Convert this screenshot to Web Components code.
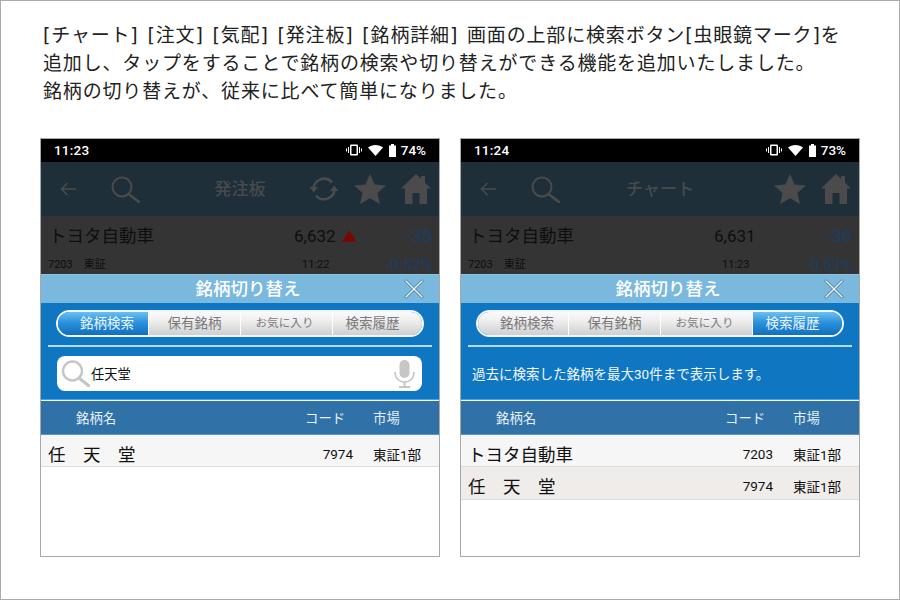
<!DOCTYPE html>
<html lang="ja">
<head>
<meta charset="utf-8">
<title>銘柄切り替え</title>
<style>
html, body { margin: 0; padding: 0; background: #fff; }
body { font-family: Roboto, "Noto Sans CJK JP", sans-serif; }
</style>
</head>
<body>
<release-page>
  <release-note>[チャート] [注文] [気配] [発注板] [銘柄詳細] 画面の上部に検索ボタン[虫眼鏡マーク]を<br>追加し、タップをすることで銘柄の検索や切り替えができる機能を追加いたしました。<br>銘柄の切り替えが、従来に比べて簡単になりました。</release-note>
  <phone-shot slot="shots">
    <status-bar time="11:23" battery="74%"></status-bar>
    <app-nav title-text="発注板" refresh></app-nav>
    <stock-quote name="トヨタ自動車" price="6,632" up change="-35" meta="7203&#12288;東証" time="11:22" rate="-0.52%"></stock-quote>
    <switch-panel active="0">
      <search-box value="任天堂"></search-box>
    </switch-panel>
    <stock-table>
      <stock-row name="任　天　堂" code="7974" market="東証1部"></stock-row>
    </stock-table>
  </phone-shot>
  <phone-shot slot="shots">
    <status-bar time="11:24" battery="73%"></status-bar>
    <app-nav title-text="チャート"></app-nav>
    <stock-quote name="トヨタ自動車" price="6,631" change="-36" meta="7203&#12288;東証" time="11:23" rate="-0.53%"></stock-quote>
    <switch-panel active="3">
      <p-note>過去に検索した銘柄を最大30件まで表示します。</p-note>
    </switch-panel>
    <stock-table>
      <stock-row name="トヨタ自動車" code="7203" market="東証1部"></stock-row>
      <stock-row name="任　天　堂" code="7974" market="東証1部" alt></stock-row>
    </stock-table>
  </phone-shot>
</release-page>

<script>
const JP = `Roboto, "Noto Sans CJK JP", sans-serif`;

class Base extends HTMLElement {
    constructor(){
        super();
        this.shadowDOM = this.attachShadow({mode:"open"});
    }
    connectedCallback(){
        this.render();
    }
    attr(name) {
        return this.getAttribute(name) || "";
    }
}

class ReleasePage extends Base {
    render() {
        this.shadowDOM.innerHTML = `
        <style>
        :host { display: block; width: 900px; height: 600px; box-sizing: border-box; border: 1px solid #aaa; }
        .shots { display: flex; gap: 20px; padding-left: 39px; margin-top: 24px; }
        </style>
        <slot></slot>
        <div class="shots"><slot name="shots"></slot></div>
        `;
    }
}

class ReleaseNote extends Base {
    render() {
        this.shadowDOM.innerHTML = `
        <style>
        :host { display: block; padding: 20px 0 0 42px; height: 93px; font: 400 19px/28px "DejaVu Sans", "Noto Sans CJK JP", sans-serif; letter-spacing: .83px; word-spacing: 2px; color: #222; white-space: nowrap; }
        </style>
        <slot></slot>
        `;
    }
}

class PhoneShot extends Base {
    render() {
        this.shadowDOM.innerHTML = `
        <style>
        :host { display: flex; flex-direction: column; width: 400px; height: 419px; box-sizing: border-box; border: 1px solid #a8a8a8; background: #fff; overflow: hidden; font-family: ${JP}; }
        </style>
        <slot></slot>
        `;
    }
}

class StatusBar extends Base {
    render() {
        this.shadowDOM.innerHTML = `
        <style>
        :host { display: flex; align-items: center; height: 23px; flex: none; box-sizing: border-box; padding: 0 13px 1px; background: #000; color: #fff; font: 500 13.500px Roboto, sans-serif; }
        .time { flex: 1; letter-spacing: .2px; }
        .icons { display: flex; align-items: center; }
        svg { display: block; fill: #fff; }
        .vib { margin-right: 6px; }
        .wifi { margin-right: 6px; }
        .bat { margin-right: 5px; }
        </style>
        <span class="time">${this.attr("time")}</span>
        <span class="icons">
          <svg class="vib" width="16" height="12" viewBox="0 0 16 12"><path d="M5 0.500h6a1 1 0 0 1 1 1v9a1 1 0 0 1-1 1H5a1 1 0 0 1-1-1v-9a1 1 0 0 1 1-1zM5.500 2v8h5V2z" fill-rule="evenodd"/><path d="M2 3h1v6H2zM13 3h1v6h-1zM0 4.500h1v3H0zM15 4.500h1v3h-1z"/></svg>
          <svg class="wifi" width="15" height="11" viewBox="0 0 15 11"><path d="M0 2.600C2 1 4.600 0 7.500 0S13 1 15 2.600L7.500 11z"/></svg>
          <svg class="bat" width="7" height="13" viewBox="0 0 7 13"><path d="M2 0h3v1.500h2V13H0V1.500h2z"/></svg>
          <span>${this.attr("battery")}</span>
        </span>
        `;
    }
}

class AppNav extends Base {
    render() {
        const refresh = this.hasAttribute("refresh") ? `
          <svg class="refresh" width="30" height="26" viewBox="0 0 30 26" fill="none" stroke="#4b4b4b" stroke-width="2.600">
            <path d="M4.500 13A10.500 10.500 0 0 1 23 6.500"/><path d="M25.500 13A10.500 10.500 0 0 1 7 19.500"/>
            <path d="M0.500 11h8.500l-4.300 5.500zM21 15h8.500l-4.300-5.500z" fill="#4b4b4b" stroke="none"/>
          </svg>` : "";
        this.shadowDOM.innerHTML = `
        <style>
        :host { display: grid; grid-template-columns: 1fr auto 1fr; align-items: center; height: 54px; flex: none; background: #1e2f3a; }
        .left { display: flex; align-items: center; padding-left: 19px; gap: 35px; }
        .right { display: flex; align-items: center; justify-content: flex-end; padding-right: 8px; gap: 15px; }
        .title { font: 500 17.200px "Noto Sans CJK JP", sans-serif; color: #474a4c; padding-bottom: 3px; }
        svg { display: block; }
        </style>
        <div class="left">
          <svg width="16" height="14" viewBox="0 0 16 14" fill="none" stroke="#4b4b4b" stroke-width="1.400"><path d="M16 7H1.500M7.500 1L1.500 7l6 6"/></svg>
          <svg width="29" height="27" viewBox="0 0 29 27" fill="none" stroke="#4b4b4b"><circle cx="11" cy="11" r="9.500" stroke-width="2"/><path d="M17.500 18L28 26" stroke-width="2.600" stroke-linecap="round"/></svg>
        </div>
        <div class="title">${this.attr("title-text")}</div>
        <div class="right">
          ${refresh}
          <svg width="32" height="30" viewBox="0 0 32 30" fill="#4b4b4b"><path d="M16 0l4.600 10.500L32 11.600l-8.600 7.500L26 30l-10-5.800L6 30l2.600-10.900L0 11.600l11.400-1.100z"/></svg>
          <svg width="30" height="30" viewBox="0 0 30 30" fill="#4b4b4b"><path d="M15 0l5 4.800V2h4v6.700l6 5.800h-4V30h-7.500V19h-7v11H4V14.500H0z"/></svg>
        </div>
        `;
    }
}

class StockQuote extends Base {
    render() {
        const up = this.hasAttribute("up") ? `<svg width="15" height="12" viewBox="0 0 15 12"><path d="M7.500 0L15 12H0z" fill="#7a0505"/></svg>` : "";
        this.shadowDOM.innerHTML = `
        <style>
        :host { display: grid; grid-template-columns: 1fr 62px 76px; grid-template-rows: 40px 18px; height: 58px; flex: none; background: #343434; color: #0e0e0e; padding: 0 7px 0 8px; box-sizing: border-box; overflow: hidden; }
        .name, .price, .chg { margin-top: 7px; height: 26px; line-height: 26px; white-space: nowrap; }
        .name { font-size: 17.500px; }
        .price { font-size: 17px; display: flex; align-items: center; gap: 6px; }
        .chg { font-size: 18px; justify-self: end; color: #1a3d66; }
        .meta, .time, .rate { line-height: 18px; white-space: nowrap; }
        .meta { font-size: 11px; margin-left: -1px; }
        .time { font-size: 11px; margin-left: 8px; }
        .rate { font-size: 15.500px; justify-self: end; color: #1a3d66; }
        </style>
        <div class="name">${this.attr("name")}</div>
        <div class="price"><span>${this.attr("price")}</span>${up}</div>
        <div class="chg">${this.attr("change")}</div>
        <div class="meta">${this.attr("meta")}</div>
        <div class="time">${this.attr("time")}</div>
        <div class="rate">${this.attr("rate")}</div>
        `;
    }
}

class SwitchPanel extends Base {
    render() {
        const labels = ["銘柄検索", "保有銘柄", "お気に入り", "検索履歴"];
        const active = Number(this.attr("active"));
        const tabs = labels.map((label, i) =>
            `<div class="tab ${i === active ? "on" : ""} ${label.length > 4 ? "small" : ""}">${label}</div>`).join("");
        this.shadowDOM.innerHTML = `
        <style>
        :host { display: block; flex: none; }
        .head { display: flex; align-items: center; justify-content: center; position: relative; height: 29px; background: #7ab8de; color: #fff; font: 500 17.500px "Noto Sans CJK JP", sans-serif; border-top: 1px solid #8cc4e6; box-sizing: border-box; padding: 0 0 4px 16px; }
        .close { position: absolute; right: 15px; top: 4px; }
        .body { height: 97px; box-sizing: border-box; background: #0f76c2; padding: 7px 7px 0; border-bottom: 1px solid #4da0dc; display: flex; flex-direction: column; }
        .tabs { display: grid; grid-template-columns: 90px 92px 92px 1fr; height: 27px; margin: 0 8px; box-sizing: border-box; border: 2px solid #f2f6fa; border-radius: 13.500px; overflow: hidden; flex: none; }
        .tab { display: flex; align-items: center; justify-content: center; padding-bottom: 3px; box-sizing: border-box; font-size: 13.500px; color: #7a7a7a; background: linear-gradient(#fafafa, #f0f0f0 35%, #cfcfcf); border-left: 1px solid #fff; white-space: nowrap; }
        .tab:first-child { border-left: 0; padding-left: 8px; }
        .tab:last-child { padding-right: 10px; }
        .tab.small { font-size: 11.600px; padding-right: 4px; }
        .tab.on { color: #e8f4fc; background: linear-gradient(#6cc0f2, #2c92dc 45%, #0f6fbe); }
        hr { margin: 8px 0 0; border: 0; height: 2px; background: #b5dbf3; flex: none; }
        .content { flex: 1; }
        .line { height: 1px; background: #fff; }
        </style>
        <div class="head">銘柄切り替え
          <svg class="close" width="20" height="20" viewBox="0 0 20 20" fill="none" stroke-linecap="round">
            <path d="M2 2l16 16M18 2L2 18" stroke="#4d7f9f" stroke-width="3"/>
            <path d="M2 2l16 16M18 2L2 18" stroke="#eef6fb" stroke-width="1.400"/>
          </svg>
        </div>
        <div class="body">
          <div class="tabs">${tabs}</div>
          <hr>
          <div class="content"><slot></slot></div>
        </div>
        <div class="line"></div>
        `;
    }
}

class SearchBox extends Base {
    render() {
        this.shadowDOM.innerHTML = `
        <style>
        :host { display: flex; align-items: center; height: 35px; margin: 9px 10px 0 9px; box-sizing: border-box; background: #fff; border-radius: 8px; padding: 0 7px 0 4px; color: #111; font-size: 13.300px; }
        .text { flex: 1; margin-left: 1px; }
        svg { display: block; }
        </style>
        <svg width="29" height="27" viewBox="0 0 29 27" fill="none" stroke="#c6c6c6"><circle cx="11.500" cy="11" r="9.500" stroke-width="2.400"/><path d="M18 18l10 8" stroke-width="3.200" stroke-linecap="round"/></svg>
        <span class="text">${this.attr("value")}</span>
        <svg width="21" height="28" viewBox="0 0 21 28" fill="none"><rect x="5.500" y="0" width="10" height="18" rx="5" fill="#c6c6c6"/><path d="M1 12c0 6 4 10 9.500 10S20 18 20 12" stroke="#c6c6c6" stroke-width="1.600"/><path d="M10.500 22v4M5 27h11" stroke="#c6c6c6" stroke-width="2"/></svg>
        `;
    }
}

class PNote extends Base {
    render() {
        this.shadowDOM.innerHTML = `
        <style>
        :host { display: block; padding: 17px 0 0 4px; color: #f2f8fc; font-size: 13.500px; line-height: 20px; white-space: nowrap; }
        </style>
        <slot></slot>
        `;
    }
}

class StockTable extends Base {
    render() {
        this.shadowDOM.innerHTML = `
        <style>
        :host { display: block; flex: 1; background: #fff; }
        .head { display: grid; grid-template-columns: 1fr 48px 66px; column-gap: 20px; align-items: center; height: 33px; box-sizing: content-box; background: #3072a8; color: #e6eff6; font-size: 13.400px; padding-left: 35px; border-bottom: 1px solid #5a92bf; white-space: nowrap; }
        .head span { padding-bottom: 2px; }
        </style>
        <div class="head"><span>銘柄名</span><span>コード</span><span>市場</span></div>
        <slot></slot>
        `;
    }
}

class StockRow extends Base {
    render() {
        const alt = this.hasAttribute("alt");
        this.shadowDOM.innerHTML = `
        <style>
        :host { display: grid; grid-template-columns: 1fr 48px 66px; column-gap: 20px; align-items: center; height: ${alt ? 33 : 32}px; box-sizing: border-box; background: ${alt ? "#efecea" : "#f6f6f6"}; border-bottom: 1px solid #ddd; color: #111; padding-left: 7px; font-size: 13.500px; white-space: nowrap; }
        span { padding-top: 6px; }
        .name { font-size: 17.500px; padding-top: 5px; }
        .code { text-align: right; }
        </style>
        <span class="name">${this.attr("name")}</span>
        <span class="code">${this.attr("code")}</span>
        <span class="market">${this.attr("market")}</span>
        `;
    }
}

customElements.define("release-page", ReleasePage);
customElements.define("release-note", ReleaseNote);
customElements.define("phone-shot", PhoneShot);
customElements.define("status-bar", StatusBar);
customElements.define("app-nav", AppNav);
customElements.define("stock-quote", StockQuote);
customElements.define("switch-panel", SwitchPanel);
customElements.define("search-box", SearchBox);
customElements.define("p-note", PNote);
customElements.define("stock-table", StockTable);
customElements.define("stock-row", StockRow);
</script>
</body>
</html>
